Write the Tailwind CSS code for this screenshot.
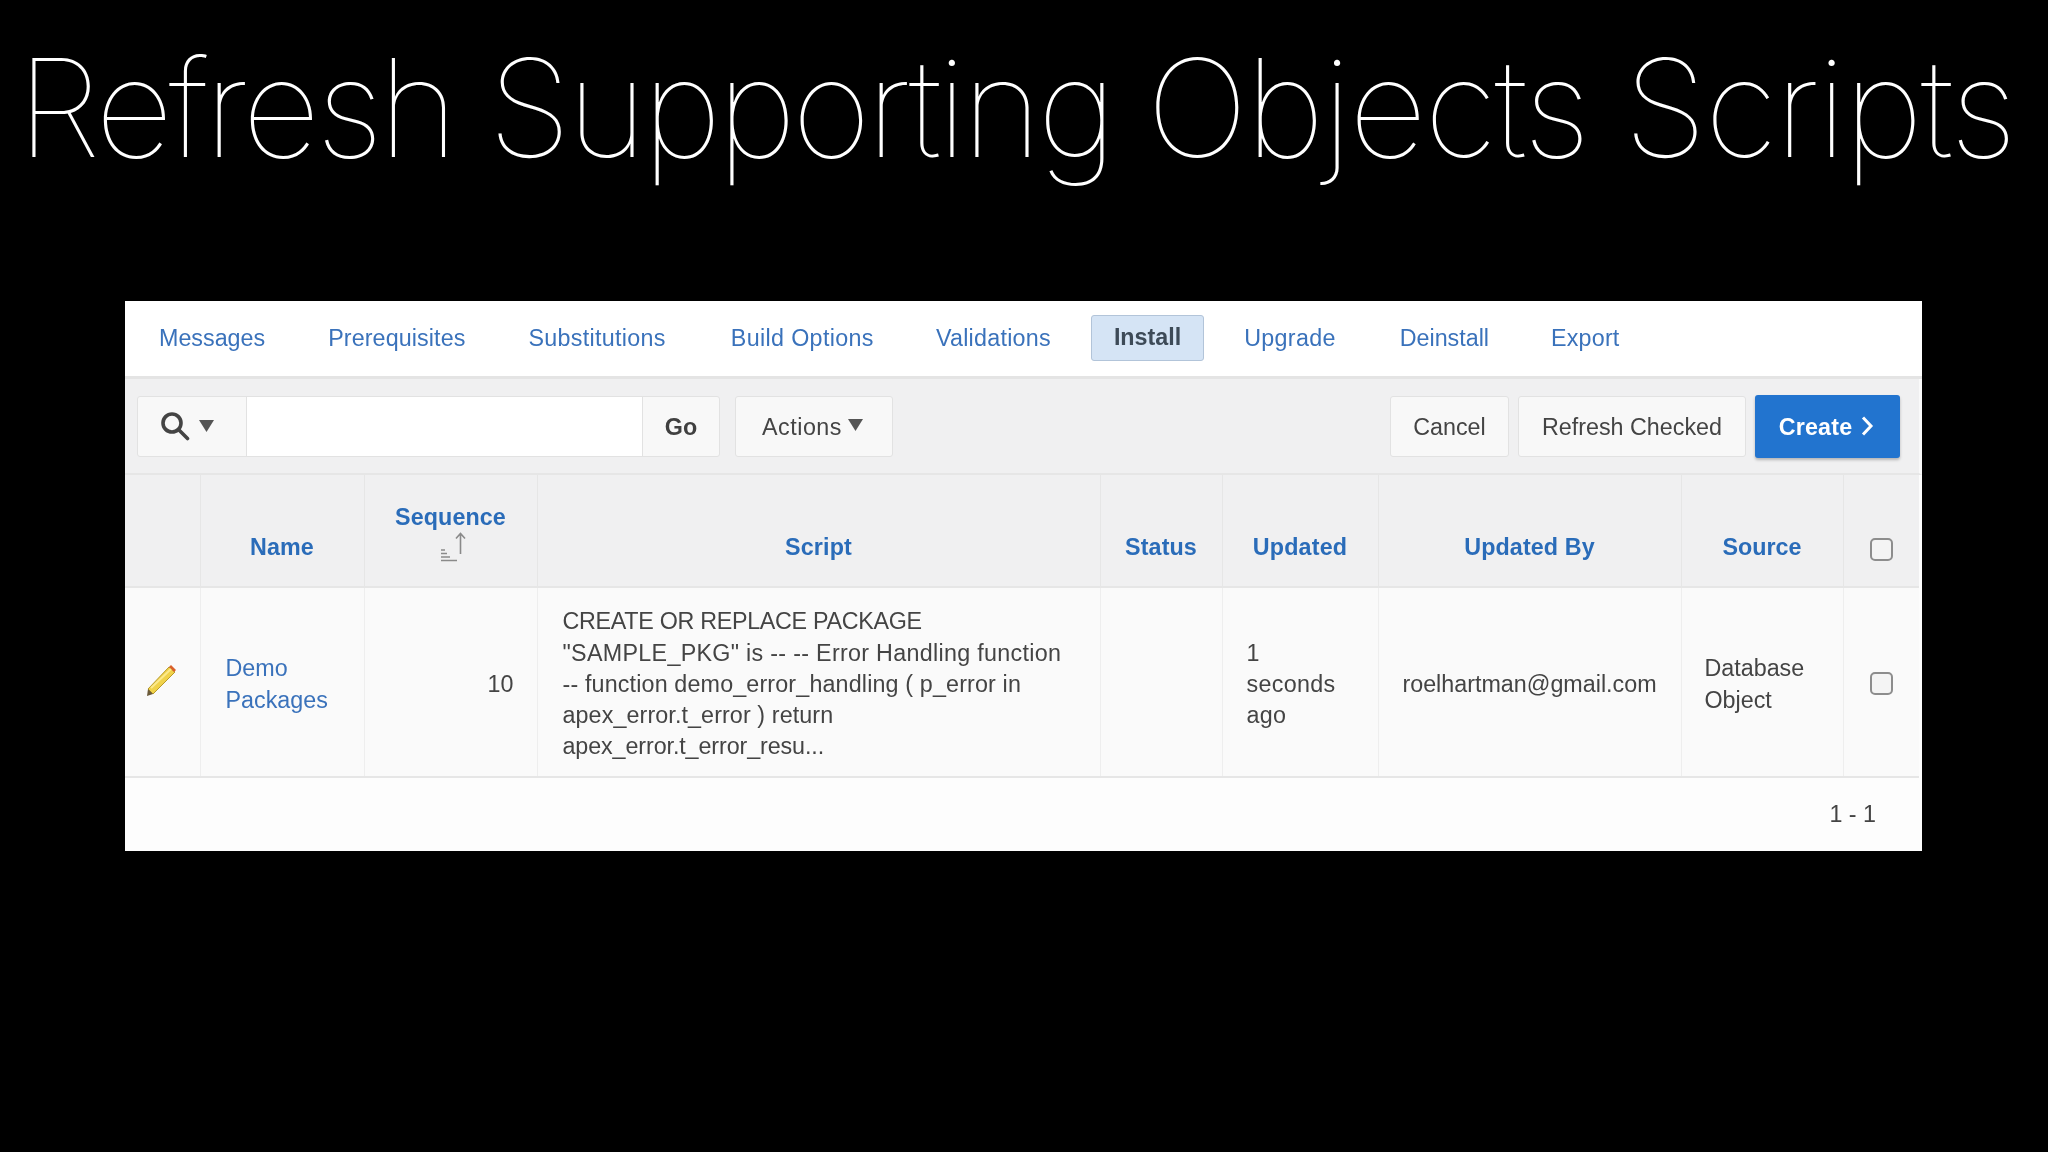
<!DOCTYPE html>
<html>
<head>
<meta charset="utf-8">
<script src="https://cdn.jsdelivr.net/npm/@tailwindcss/browser@4"></script>
</head>
<body class="bg-black">
<div class="w-[2048px] h-[1152px] bg-black overflow-hidden font-['Liberation_Sans',Arial,sans-serif]">
  <h1 class="h-[301px] pl-[17px] pt-[28px] text-white text-[136px] leading-[160px] font-thin font-['Inter',sans-serif] tracking-[-4.2px] whitespace-nowrap">Refresh Supporting <span class="tracking-[-2.6px]">Objects</span> <span class="tracking-[-2.3px] ml-[2px]">Scripts</span></h1>
  <div class="ml-[125px] w-[1797px] h-[550px] bg-[#fdfdfd] text-[23.3px] leading-[31.3px] text-[#444] blur-[0.6px]">
    <nav class="h-[78px] bg-white border-b-[3px] border-[#e4e4e4] flex items-center pl-[11px] text-[#3a72bb]">
      <a class="ml-0 px-[23px]">Messages</a>
      <a class="ml-[17px] px-[23px] tracking-[0.1px]">Prerequisites</a>
      <a class="ml-[17px] px-[23px] tracking-[0.3px]">Substitutions</a>
      <a class="ml-[19px] px-[23px] tracking-[0.35px]">Build Options</a>
      <a class="ml-[16px] px-[23px] tracking-[0.25px]">Validations</a>
      <a class="ml-[17px] px-[22px] h-[46px] mb-[1px] flex items-center bg-[#d5e4f5] border border-[#b2c4d9] rounded-[3px] font-bold text-[#3d4a57]">Install</a>
      <a class="ml-[17px] px-[23px] tracking-[0.3px]">Upgrade</a>
      <a class="ml-[18px] px-[23px] tracking-[0px]">Deinstall</a>
      <a class="ml-[16px] px-[23px] tracking-[0.2px]">Export</a>
    </nav>
    <div class="h-[96px] bg-[#f0f0f1] border-b-[2px] border-[#e6e6e6] flex items-center pl-[12px] pr-[19px] border-r-[3px] border-r-[#fafafa]">
      <div class="flex h-[61px] w-[583px] bg-[#f8f8f8] border border-[#e2e2e2] rounded-[3px]">
        <div class="w-[109px] flex items-center justify-center gap-[9px] pr-[10px] border-r border-[#e2e2e2]">
          <svg width="30" height="30" viewBox="0 0 30 30" fill="none" stroke="#444" stroke-width="3.6"><circle cx="12" cy="12" r="9"/><path d="M18.5 18.5l9 9" stroke-linecap="round"/></svg>
          <svg width="15" height="12" viewBox="0 0 15 12" fill="#555"><path d="M0 0h15L7.5 12z"/></svg>
        </div>
        <div class="w-[395px] bg-white"></div>
        <div class="flex-1 flex items-center justify-center pt-[3px] border-l border-[#e2e2e2] font-bold text-[#404040]">Go</div>
      </div>
      <div class="ml-[15px] w-[158px] h-[61px] bg-[#f8f8f8] border border-[#e2e2e2] rounded-[3px] flex items-center justify-center gap-[6px] pr-[3px] tracking-[0.5px]"><span class="pt-[3px]">Actions</span>
        <svg width="15" height="12" viewBox="0 0 15 12" fill="#555" class="mb-[3px]"><path d="M0 0h15L7.5 12z"/></svg>
      </div>
      <div class="ml-auto flex items-center gap-[9px]">
        <div class="w-[119px] h-[61px] pt-[3px] bg-[#f8f8f8] border border-[#e2e2e2] rounded-[3px] flex items-center justify-center">Cancel</div>
        <div class="w-[228px] h-[61px] pt-[3px] bg-[#f8f8f8] border border-[#e2e2e2] rounded-[3px] flex items-center justify-center">Refresh Checked</div>
        <div class="w-[145px] h-[63px] bg-[#2274cf] rounded-[3px] shadow-[0_2px_3px_rgba(0,0,0,0.25)] text-white font-bold flex items-center justify-center gap-[9px] pr-[2px] tracking-[0.2px]"><span class="pt-[3px]">Create</span>
          <svg width="13" height="20" viewBox="0 0 13 20" fill="none" stroke="#fff" stroke-width="3"><path d="M2 1.5l8 8.5-8 8.5"/></svg>
        </div>
      </div>
    </div>
    <table class="w-[1794px] table-fixed border-collapse">
      <colgroup>
        <col class="w-[75px]"><col class="w-[164px]"><col class="w-[173px]"><col class="w-[563px]"><col class="w-[122px]"><col class="w-[156px]"><col class="w-[303px]"><col class="w-[162px]"><col class="w-[76px]">
      </colgroup>
      <thead>
        <tr class="h-[112px] bg-[#f0f0f1] border-b-[2px] border-[#e6e6e6] font-bold text-[#2a6cb9] text-center align-bottom">
          <th class="border-r border-[#e6e6e6]"></th>
          <th class="border-r border-[#e6e6e6] font-bold align-bottom pb-[23px] tracking-[0.1px]">Name</th>
          <th class="border-r border-[#e6e6e6] font-bold align-bottom pb-[22px]">
            <div class="tracking-[0.1px]">Sequence</div>
            <svg class="mx-auto mt-[-3px] block translate-x-[2px]" width="30" height="34" viewBox="0 0 30 34" fill="none" stroke="#8a8a8a" stroke-width="1.6"><path d="M3 20h4M3 23.500h6M3 27h9M3 30.500h16" stroke-width="1.6"/><path d="M22.500 24V4M18 8.500l4.500-5 4.500 5"/></svg>
          </th>
          <th class="border-r border-[#e6e6e6] font-bold align-bottom pb-[23px] tracking-[0.15px]">Script</th>
          <th class="border-r border-[#e6e6e6] font-bold align-bottom pb-[23px] tracking-[0.1px]">Status</th>
          <th class="border-r border-[#e6e6e6] font-bold align-bottom pb-[23px] tracking-[0.2px]">Updated</th>
          <th class="border-r border-[#e6e6e6] font-bold align-bottom pb-[23px] tracking-[0.1px]">Updated By</th>
          <th class="border-r border-[#e6e6e6] font-bold align-bottom pb-[23px]">Source</th>
          <th class="align-bottom pb-[25px]"><span class="block mx-auto w-[23px] h-[23px] bg-[#f4f4f4] border-2 border-[#8d8d8d] rounded-[5px]"></span></th>
        </tr>
      </thead>
      <tbody>
        <tr class="h-[190px] bg-[#fafafa] border-b-[2px] border-[#e6e6e6]">
          <td class="border-r border-[#eeeeee]">
            <svg class="ml-[20px] mb-[4px]" width="32" height="32" viewBox="0 0 32 32"><path d="M3 25L24 3l6 5L8 30z" fill="#f0d24a" stroke="#b89a2a" stroke-width="1"/><path d="M24 3l2-2 5 5-2 2z" fill="#d9602a"/><path d="M3 25l5 5-6 2z" fill="#6b5a3a"/><path d="M6 24L26 5" stroke="#fbe98c" stroke-width="2"/></svg>
          </td>
          <td class="border-r border-[#eeeeee] pl-[25px] pt-[5px] text-[#3a72bb]">Demo<br>Packages</td>
          <td class="border-r border-[#eeeeee] text-right pr-[23px] pt-[5px]">10</td>
          <td class="border-r border-[#eeeeee] pl-[25px] pr-[20px] pt-[5px]"><span class="tracking-[-0.3px]">CREATE OR REPLACE PACKAGE</span><br><span class="tracking-[0.3px]">"SAMPLE_PKG" is -- -- Error Handling function</span><br><span class="tracking-[0.15px]">-- function demo_error_handling ( p_error in</span><br><span class="tracking-[0.1px]">apex_error.t_error ) return</span><br><span class="tracking-[-0.1px]">apex_error.t_error_resu...</span></td>
          <td class="border-r border-[#eeeeee]"></td>
          <td class="border-r border-[#eeeeee] pl-[24px] pt-[5px] tracking-[0.3px]">1<br>seconds<br>ago</td>
          <td class="border-r border-[#eeeeee] pt-[5px] text-center">roelhartman@gmail.com</td>
          <td class="border-r border-[#eeeeee] pl-[23px] pt-[5px]">Database<br>Object</td>
          <td><span class="block mx-auto mt-[3px] w-[23px] h-[23px] bg-[#f4f4f4] border-2 border-[#8d8d8d] rounded-[5px]"></span></td>
        </tr>
      </tbody>
    </table>
    <div class="h-[70px] pr-[46px] pt-[4px] flex items-center justify-end">1 - 1</div>
  </div>
</div>
</body>
</html>
